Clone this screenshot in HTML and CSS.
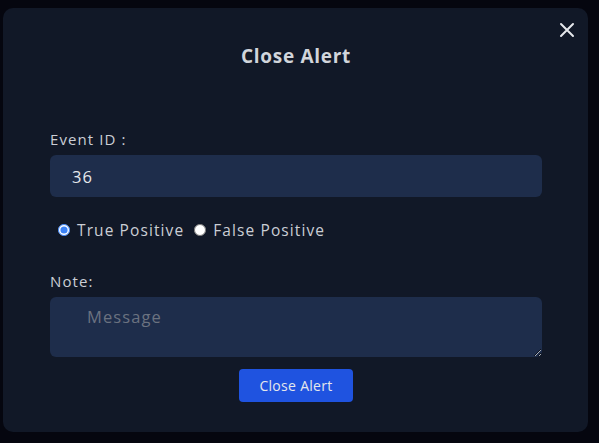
FILE: index.html
```html
<!DOCTYPE html>
<html lang="en">

<head>
    <meta charset="UTF-8">
    <meta name="viewport" content="width=device-width, initial-scale=1.0">
    <title>Close Alert</title>
    <link rel="stylesheet" href="styles.css">
</head>

<body>
    <div class="modal">
        <button class="close-x" aria-label="Close">
            <svg width="16" height="16" viewBox="0 0 16 16">
                <path d="M2 2 L14 14 M14 2 L2 14" stroke="#e5e7eb" stroke-width="2" stroke-linecap="round" />
            </svg>
        </button>

        <h2>Close Alert</h2>

        <form class="form">
            <label for="event-id" class="label">Event ID :</label>
            <input id="event-id" class="field" type="text" value="36">

            <div class="radios">
                <label class="radio"><input type="radio" name="verdict" checked> True Positive</label>
                <label class="radio"><input type="radio" name="verdict"> False Positive</label>
            </div>

            <label for="note" class="label note-label">Note:</label>
            <textarea id="note" class="field note" placeholder="Message"></textarea>

            <div class="actions">
                <button type="button" class="submit">Close Alert</button>
            </div>
        </form>
    </div>
</body>

</html>
```
FILE: styles.css
```css
* {
    box-sizing: border-box;
}

body {
    margin: 0;
    padding: 8px 11px 11px 3px;
    height: 443px;
    background-color: #05060f;
    font-family: 'Open Sans', sans-serif;
    letter-spacing: 1.1px;
}

.modal {
    position: relative;
    height: 424px;
    background-color: #111827;
    border-radius: 10px;
    padding: 35px 46px 0 47px;
}

.close-x {
    position: absolute;
    top: 14px;
    right: 13px;
    background: none;
    border: none;
    padding: 0;
    cursor: pointer;
}

h2 {
    margin: 0 0 60px;
    text-align: center;
    color: #d1d5db;
    font-size: 19px;
    font-weight: 700;
    letter-spacing: 0.7px;
}

.label {
    display: block;
    color: #cbced5;
    font-size: 15px;
    margin-bottom: 6px;
}

.field {
    display: block;
    width: 100%;
    background-color: #1e2d4b;
    border: none;
    border-radius: 6px;
    color: #e5e7eb;
    font-family: inherit;
    letter-spacing: inherit;
    outline: none;
}

input.field {
    height: 42px;
    padding: 0 22px;
    font-size: 16.5px;
}

.radios {
    display: flex;
    gap: 9px;
    margin: 22px 0 30px 7px;
}

.radio {
    display: flex;
    align-items: center;
    color: #cbced5;
    font-size: 15.5px;
}

.radio input {
    margin: 0 7px 0 1px;
    width: 12px;
    height: 12px;
    accent-color: #3b82f6;
}

.note {
    height: 60px;
    padding: 8px 37px;
    font-size: 16.5px;
    resize: vertical;
}

.note::placeholder {
    color: #6b7280;
}

.actions {
    text-align: center;
    margin-top: 12px;
}

.submit {
    width: 114px;
    height: 33px;
    background-color: #1f53e0;
    color: #e5e7eb;
    border: none;
    border-radius: 4px;
    font-family: inherit;
    font-size: 14px;
    letter-spacing: 0.3px;
    cursor: pointer;
}
```
